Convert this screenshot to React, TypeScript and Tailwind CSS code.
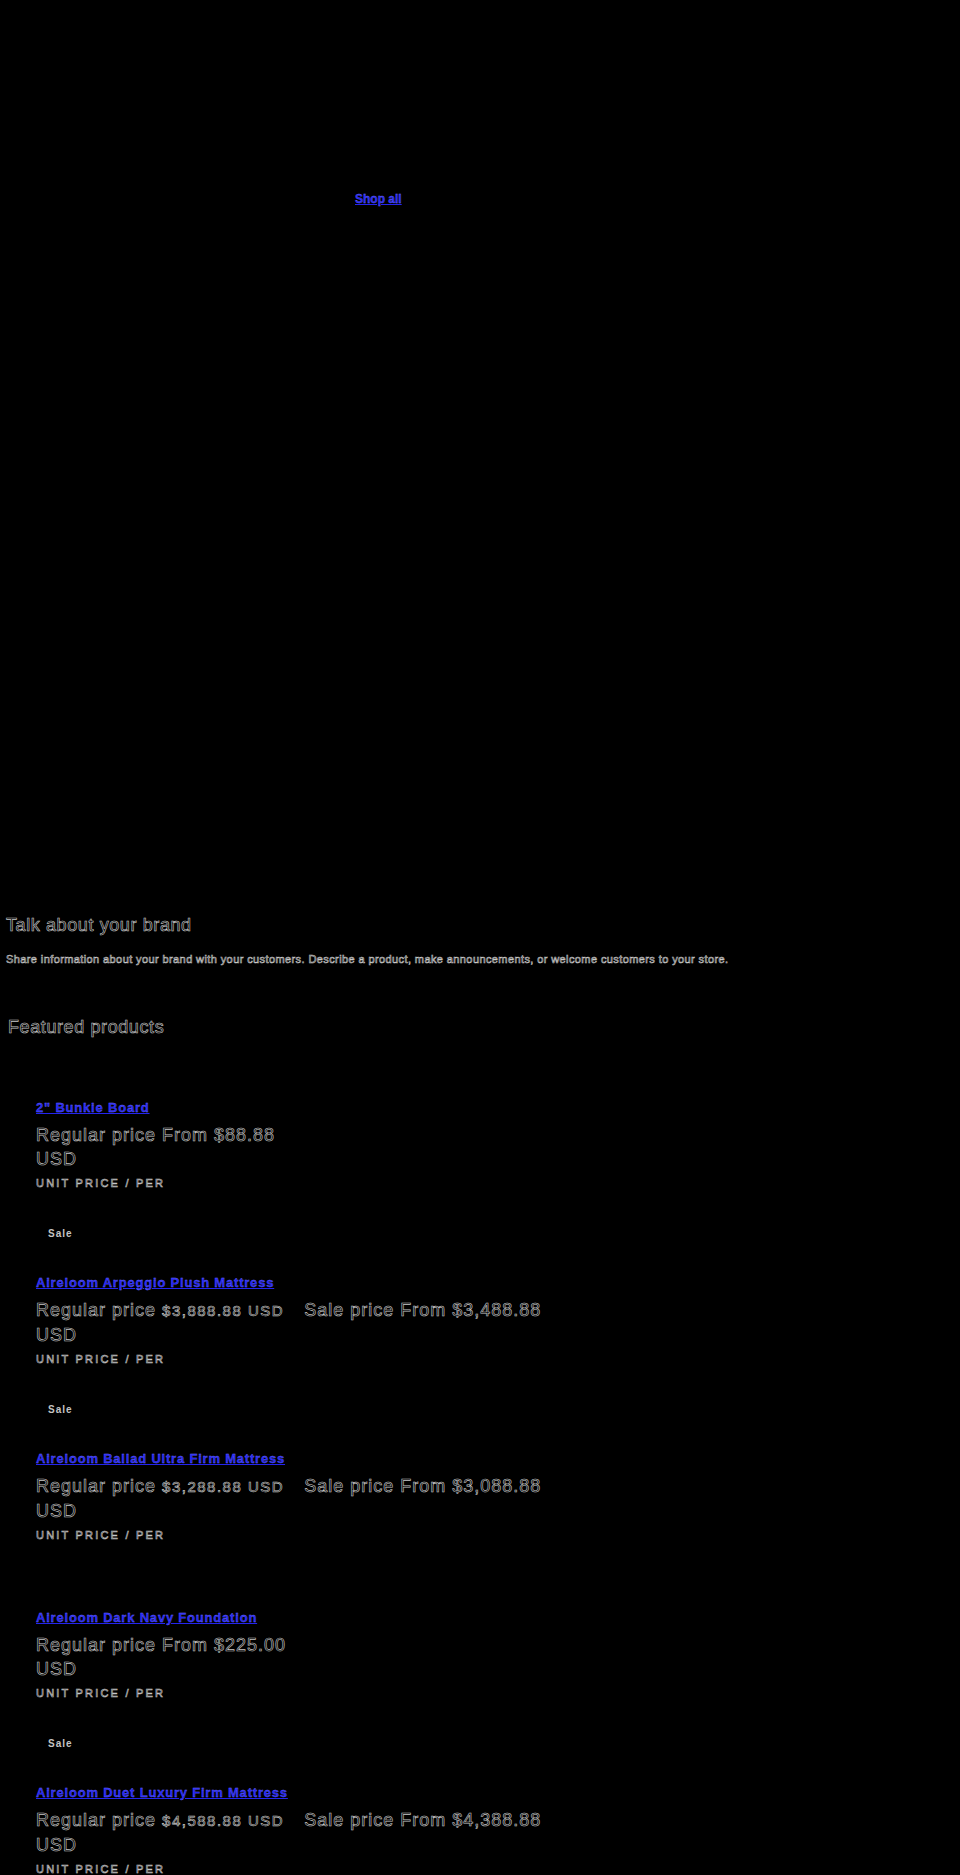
import React from 'react';

type Product = {
  title: string;
  onSale: boolean;
  regular?: string;
  price: string;
};

const products: Product[] = [
  { title: '2" Bunkie Board', onSale: false, price: 'From $88.88' },
  { title: 'Aireloom Arpeggio Plush Mattress', onSale: true, regular: '$3,888.88 USD', price: 'From $3,488.88' },
  { title: 'Aireloom Ballad Ultra Firm Mattress', onSale: true, regular: '$3,288.88 USD', price: 'From $3,088.88' },
  { title: 'Aireloom Dark Navy Foundation', onSale: false, price: 'From $225.00' },
  { title: 'Aireloom Duet Luxury Firm Mattress', onSale: true, regular: '$4,588.88 USD', price: 'From $4,388.88' },
];

// hollow, edge-like text as in the reference
const ghost = 'text-transparent [-webkit-text-stroke:0.6px_#c8c8c8]';
const linkCls = 'font-bold text-[#2424f0] underline decoration-[#2424f0] [-webkit-text-stroke:0.3px_#7070ff]';

function ProductCard({ product, first }: { product: Product; first: boolean }) {
  return (
    <div className="pl-9">
      {product.onSale && (
        <div className="mt-[36px] pl-[12px] h-[13px] text-[10px] leading-[13px] font-bold tracking-[1px] text-[#c4c4c4]">Sale</div>
      )}
      <a
        href="#"
        className={`block w-fit text-[13px] leading-4 tracking-[0.8px] ${linkCls} ${
          product.onSale ? 'mt-[35px]' : first ? 'mt-[61px]' : 'mt-[67px]'
        }`}
      >
        {product.title}
      </a>
      <div className={`mt-[7px] text-[18px] leading-6 tracking-[1px] ${ghost}`}>
        <span>Regular price </span>
        {product.regular ? (
          <>
            <span className="text-[15px] tracking-[1.5px]">{product.regular}</span>
            <span className="ml-5">Sale price {product.price}</span>
          </>
        ) : (
          <span>{product.price}</span>
        )}
        <div>USD</div>
      </div>
      <div className={`mt-[4px] text-[11px] leading-4 uppercase tracking-[2.2px] ${ghost}`}>
        Unit price / per
      </div>
    </div>
  );
}

export default function App() {
  return (
    <div className="min-h-[1875px] bg-black font-['Liberation_Sans',Arial,sans-serif] overflow-hidden">
      {/* collection list, images not loaded */}
      <div className="h-[913px] pt-[186px] pl-[355px]">
        <a href="#" className={`text-[12px] leading-4 ${linkCls}`}>Shop all</a>
      </div>

      {/* rich text */}
      <div className="px-[6px]">
        <h2 className={`text-[18px] leading-6 tracking-[0.6px] ${ghost}`}>Talk about your brand</h2>
        <p className={`mt-[14px] text-[11px] leading-4 tracking-[0.4px] ${ghost} [-webkit-text-stroke:0.5px_#d0d0d0]`}>
          Share information about your brand with your customers. Describe a product, make announcements, or welcome customers to your store.
        </p>
      </div>

      {/* featured collection */}
      <h2 className={`mt-[48px] pl-2 text-[18px] leading-6 tracking-[0.6px] ${ghost}`}>Featured products</h2>
      <div>
        {products.map((p, i) => (
          <ProductCard key={p.title} product={p} first={i === 0} />
        ))}
      </div>
    </div>
  );
}
